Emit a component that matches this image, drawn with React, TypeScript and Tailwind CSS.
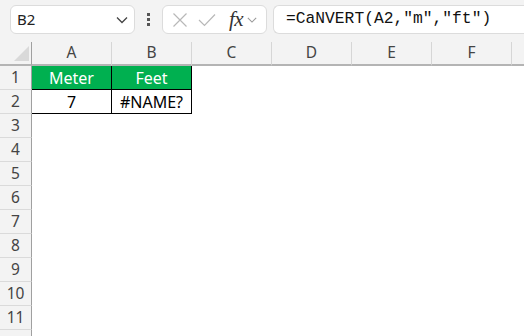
import React from "react";

const cols = ["A", "B", "C", "D", "E", "F", "G"];
const rows = [1, 2, 3, 4, 5, 6, 7, 8, 9, 10, 11, 12];

function Chevron({ className = "" }: { className?: string }) {
  return (
    <svg width="12" height="8" viewBox="0 0 12 8" className={className}>
      <path d="M1 1.5 L6 6.5 L11 1.5" fill="none" stroke="currentColor" strokeWidth="1.3" />
    </svg>
  );
}

/* Name box, formula buttons and the formula text field. */
function FormulaBar() {
  return (
    <div className="h-[42px] flex items-start pt-[5px] pl-[10px] gap-0">
      <div className="w-[125px] h-[29px] bg-white border border-[#dcdcdc] rounded-[6px] flex items-center justify-between pl-[6px] pr-[6px] text-[15px] text-[#222]">
        <span>B2</span>
        <Chevron className="text-[#444]" />
      </div>
      <div className="w-[27px] h-[29px] flex flex-col items-center justify-center gap-[2px]">
        <span className="w-[3px] h-[3px] bg-[#555]" />
        <span className="w-[3px] h-[3px] bg-[#555]" />
        <span className="w-[3px] h-[3px] bg-[#555]" />
      </div>
      <div className="w-[105px] h-[29px] bg-white border border-[#dcdcdc] rounded-[6px] flex items-center pl-[9px] text-[#b8b8b8]">
        <svg width="16" height="16" viewBox="0 0 16 16">
          <path d="M1.5 1.5 L14.5 14.5 M14.5 1.5 L1.5 14.5" stroke="currentColor" strokeWidth="1.2" fill="none" />
        </svg>
        <svg width="18" height="14" viewBox="0 0 18 14" className="ml-[10px]">
          <path d="M1 7 L6.5 12.5 L17 1.5" stroke="currentColor" strokeWidth="1.2" fill="none" />
        </svg>
        <span className="ml-[13px] text-[#333] italic text-[21px] leading-none font-['Liberation_Serif',serif] tracking-[-0.5px]">
          fx
        </span>
        <Chevron className="ml-[4px] text-[#999] w-[10px]" />
      </div>
      <div className="ml-[6px] flex-1 h-[29px] bg-white border border-r-0 border-[#dcdcdc] rounded-l-[6px] flex items-center pl-[12px] text-[16.3px] text-[#111] font-['Liberation_Mono',monospace]">
        =CaNVERT(A2,"m","ft")
      </div>
    </div>
  );
}

export default function App() {
  const cell = (r: number, c: string) => {
    if (r === 1 && c === "A") return { text: "Meter", cls: "bg-[#00b050] text-white" };
    if (r === 1 && c === "B") return { text: "Feet", cls: "bg-[#00b050] text-white" };
    if (r === 2 && c === "A") return { text: "7", cls: "bg-white text-black" };
    if (r === 2 && c === "B") return { text: "#NAME?", cls: "bg-white text-black" };
    return { text: "", cls: "bg-white" };
  };

  return (
    <div className="w-[524px] h-[336px] overflow-hidden bg-[#f3f3f3] font-['Noto_Sans',sans-serif]">
      <FormulaBar />
      <div className="grid grid-cols-[32px_repeat(7,80px)] auto-rows-[24px]">
        <div className="relative border-b-2 border-[#b4b4b4] border-r border-r-[#a0a0a0]">
          <svg width="32" height="22" className="absolute left-0 top-0">
            <path d="M14 19 L29 4 L29 19 Z" fill="#d9d9d9" />
          </svg>
        </div>
        {cols.map((c) => (
          <div
            key={c}
            className="border-b-2 border-[#b4b4b4] border-r border-r-[#d6d6d6] flex items-center justify-center text-[15.5px] text-[#444]"
          >
            {c !== "G" ? c : ""}
          </div>
        ))}
        {rows.map((r) => (
          <React.Fragment key={r}>
            <div className="border-r border-r-[#a0a0a0] border-b border-b-[#dadada] flex items-center justify-center text-[15.5px] text-[#444]">
              {r < 12 ? r : ""}
            </div>
            {cols.map((c) => {
              const v = cell(r, c);
              const inTable = r <= 2 && (c === "A" || c === "B");
              return (
                <div
                  key={c}
                  className={`${v.cls} flex items-center justify-center text-[16px] ${
                    inTable ? "border-r border-b border-black" : ""
                  }`}
                >
                  {v.text}
                </div>
              );
            })}
          </React.Fragment>
        ))}
      </div>
    </div>
  );
}
